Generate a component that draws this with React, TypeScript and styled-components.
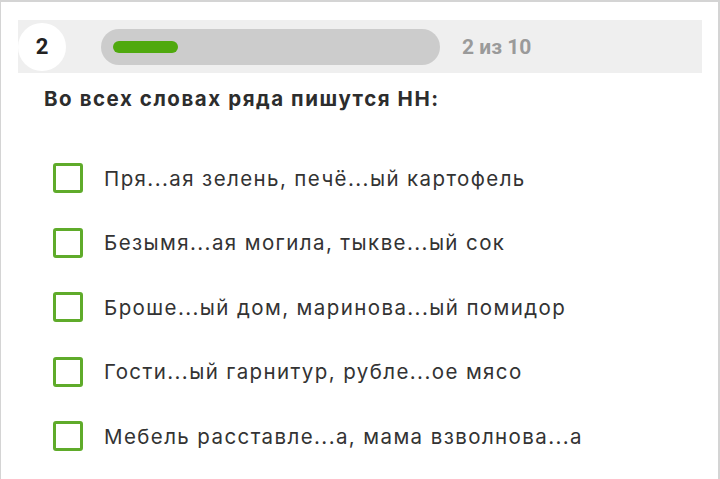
import styled, { createGlobalStyle } from 'styled-components';

const GlobalStyle = createGlobalStyle`
  body {
    margin: 0;
    background: #ffffff;
    font-family: Inter, "Open Sans", sans-serif;
  }
`;

const Page = styled.div`
  box-sizing: border-box;
  height: 479px;
  border-top: 2px solid #d4d4d4;
  border-left: 1px solid #d4d4d4;
  border-right: 2px solid #d4d4d4;
  padding: 18px 16px 0 17px;
`;

const ProgressBand = styled.div`
  display: flex;
  align-items: center;
  height: 53px;
  background: #efefef;
`;

const StepCircle = styled.div`
  width: 48px;
  height: 48px;
  border-radius: 50%;
  background: #ffffff;
  display: flex;
  align-items: center;
  justify-content: center;
  font-family: Roboto, sans-serif;
  font-weight: 700;
  font-size: 22px;
  color: #222;
`;

const Track = styled.div`
  margin-left: 35px;
  width: 339px;
  height: 36px;
  border-radius: 18px;
  background: #cccccc;
  display: flex;
  align-items: center;
  padding-left: 12px;
  box-sizing: border-box;
`;

const Fill = styled.div<{ $pct: number }>`
  width: ${(p) => p.$pct}%;
  height: 12px;
  border-radius: 6px;
  background: #4fa90e;
`;

const Counter = styled.div`
  margin-left: 22px;
  font-family: Roboto, sans-serif;
  font-weight: 700;
  font-size: 21px;
  color: #9a9a9a;
`;

const Question = styled.h2`
  margin: 13px 0 0 26px;
  font-size: 20.5px;
  font-weight: 700;
  letter-spacing: 1.55px;
  color: #2d2d2d;
  line-height: 26px;
`;

const Options = styled.div`
  display: flex;
  flex-direction: column;
  gap: 34.5px;
  margin: 51px 0 0 35px;
`;

const Option = styled.label`
  display: flex;
  align-items: center;
  gap: 21px;
  height: 30px;
  font-size: 20.5px;
  letter-spacing: 1.4px;
  color: #333;
  cursor: pointer;
`;

const Box = styled.span`
  box-sizing: border-box;
  width: 30px;
  height: 30px;
  border: 3px solid #5fab2a;
  border-radius: 3px;
  background: #fff;
`;

const answers = [
  'Пря...ая зелень, печё...ый картофель',
  'Безымя...ая могила, тыкве...ый сок',
  'Броше...ый дом, маринова...ый помидор',
  'Гости...ый гарнитур, рубле...ое мясо',
  'Мебель расставле...а, мама взволнова...а',
];

export default function App() {
  return (
    <>
      <GlobalStyle />
      <Page>
        <ProgressBand>
          <StepCircle>2</StepCircle>
          <Track>
            <Fill $pct={20} />
          </Track>
          <Counter>2 из 10</Counter>
        </ProgressBand>
        <Question>Во всех словах ряда пишутся НН:</Question>
        <Options>
          {answers.map((a) => (
            <Option key={a}>
              <Box />
              {a}
            </Option>
          ))}
        </Options>
      </Page>
    </>
  );
}
